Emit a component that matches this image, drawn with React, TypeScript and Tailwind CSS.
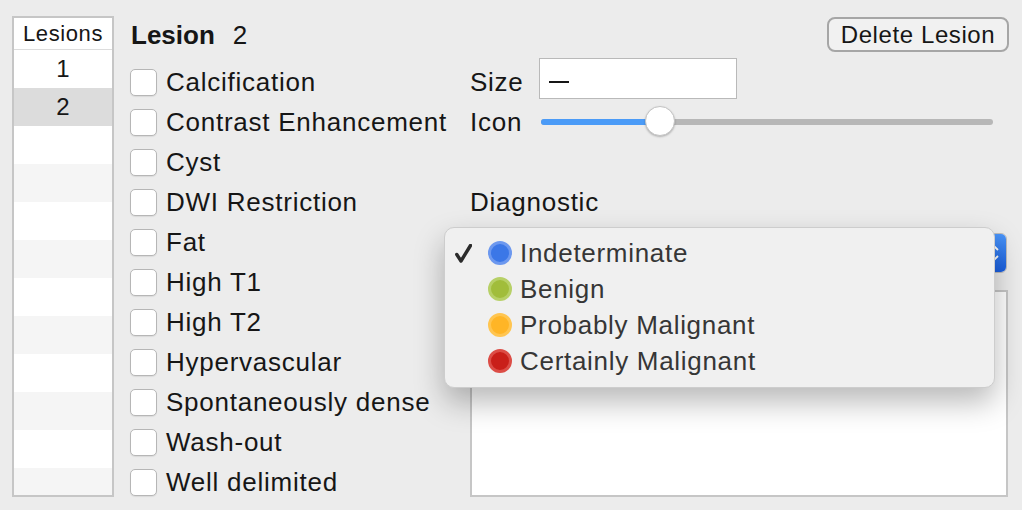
import React from 'react';

const findings = [
  'Calcification',
  'Contrast Enhancement',
  'Cyst',
  'DWI Restriction',
  'Fat',
  'High T1',
  'High T2',
  'Hypervascular',
  'Spontaneously dense',
  'Wash-out',
  'Well delimited',
];

const diagnostics = [
  { label: 'Indeterminate', ring: 'border-[#6c98ef]', fill: 'bg-[#3b77e7]', checked: true },
  { label: 'Benign', ring: 'border-[#b7d067]', fill: 'bg-[#a1bd3b]', checked: false },
  { label: 'Probably Malignant', ring: 'border-[#ffc550]', fill: 'bg-[#ffb526]', checked: false },
  { label: 'Certainly Malignant', ring: 'border-[#dc4d46]', fill: 'bg-[#c91f19]', checked: false },
];

export default function App() {
  return (
    <div className="w-[1022px] h-[510px] bg-[#ececec] flex pt-[16px] pl-[12px] pr-[13px] font-['Liberation_Sans',Arial,sans-serif] text-[#161616] overflow-hidden">
      <LesionTable />

      <div className="ml-[16px] flex-1 flex flex-col">
        <div className="mt-[1px] h-[35px] flex items-center justify-between">
          <div className="pl-[1px] flex items-baseline text-[26px] leading-none">
            <span className="font-bold">Lesion</span>
            <span className="ml-[18px]">2</span>
          </div>
          <button className="w-[182px] h-[35px] rounded-[8px] border-2 border-[#a6a6a6] bg-[#f1f1f1] text-[24px] tracking-[0.6px] leading-none">
            Delete Lesion
          </button>
        </div>

        <div className="mt-[10px] flex">
          <div className="w-[340px] flex flex-col">
            {findings.map((f) => (
              <Check key={f} label={f} />
            ))}
          </div>

          <div className="w-[538px] flex flex-col">
            <div className="h-[40px] flex items-center">
              <span className="w-[69px] text-[26px] tracking-[0.75px] leading-none">Size</span>
              <div className="w-[198px] h-[41px] mb-[7px] bg-white border border-[#b9b9b9] flex items-center pl-[9px] pt-[6px]">
                <div className="w-[20px] h-[2px] bg-[#161616]" />
              </div>
            </div>
            <div className="h-[40px] flex items-center">
              <span className="w-[71px] text-[26px] tracking-[0.75px] leading-none">Icon</span>
              <Slider />
            </div>
            <div className="h-[40px]" />
            <div className="h-[40px] flex items-center">
              <span className="text-[26px] tracking-[0.75px] leading-none">Diagnostic</span>
            </div>

            <div className="mt-[11px] h-[40px] relative">
              <PopupButton />
              <DiagnosticMenu />
            </div>

            <div className="mt-[17px] h-[207px] bg-white border-2 border-[#c6c6c6]" />
          </div>
        </div>
      </div>
    </div>
  );
}

function LesionTable() {
  const rows = Array.from({ length: 12 }, (_, i) => i);
  return (
    <div className="w-[102px] h-[481px] shrink-0 border-2 border-[#c6c6c6] bg-white flex flex-col overflow-hidden">
      <div className="h-[32px] shrink-0 border-b border-[#dcdcdc] flex items-center justify-center text-[22px] tracking-[0.6px] leading-none">
        Lesions
      </div>
      {rows.map((i) => (
        <div
          key={i}
          className={`h-[38px] shrink-0 flex items-center justify-center text-[24px] leading-none ${
            i === 1 ? 'bg-[#dcdcdc]' : i % 2 ? 'bg-[#f5f5f5]' : 'bg-white'
          }`}
        >
          {i < 2 ? i + 1 : ''}
        </div>
      ))}
    </div>
  );
}

function Check({ label }: { label: string }) {
  return (
    <div className="h-[40px] flex items-center">
      <div className="w-[27px] h-[27px] rounded-[5px] bg-white border border-[#b6b6b6] shadow-[0_1px_1px_rgba(0,0,0,0.08)]" />
      <span className="ml-[9px] text-[26px] tracking-[0.75px] leading-none">{label}</span>
    </div>
  );
}

function Slider() {
  return (
    <div className="relative w-[452px] h-[30px] flex items-center">
      <div className="w-full h-[6px] rounded-full bg-[#b7b7b7] overflow-hidden">
        <div className="w-[120px] h-full bg-[#4b9bf7]" />
      </div>
      <div className="absolute left-[104px] top-[-1px] w-[30px] h-[30px] rounded-full bg-white border border-[#c4c4c4] shadow-[0_1px_2px_rgba(0,0,0,0.25)]" />
    </div>
  );
}

function PopupButton() {
  return (
    <div className="h-full w-[537px] rounded-[6px] border border-[#bdbdbd] bg-white flex overflow-hidden">
      <div className="flex-1" />
      <div className="w-[22px] h-full bg-gradient-to-b from-[#4a94f8] to-[#1a5fe1] flex items-center justify-center">
        <svg width="10" height="20" viewBox="0 0 10 20" fill="none" stroke="#fff" strokeWidth="1.8">
          <path d="M2 7 L5 4 L8 7" />
          <path d="M2 13 L5 16 L8 13" />
        </svg>
      </div>
    </div>
  );
}

function DiagnosticMenu() {
  return (
    <div className="absolute left-[-26px] top-[-6px] w-[551px] h-[161px] rounded-[10px] bg-[#f0f0f0] border border-[#cdcdcd] shadow-[0_14px_30px_rgba(0,0,0,0.28)] pt-[7px] text-[#363636]">
      {diagnostics.map((d) => (
        <div key={d.label} className="h-[36px] flex items-center">
          <div className="w-[43px] pl-[10px] flex items-center">
            {d.checked && (
              <svg width="17" height="19" viewBox="0 0 17 19" fill="none">
                <path d="M1.8 10.5 L6 17 L15.5 1.5" stroke="#2b2b2b" strokeWidth="3.4" strokeLinejoin="round" strokeLinecap="round" />
              </svg>
            )}
          </div>
          <div className={`w-[24px] h-[24px] rounded-full border-[3px] ${d.ring} ${d.fill}`} />
          <span className="ml-[8px] text-[26px] tracking-[0.7px] leading-none">{d.label}</span>
        </div>
      ))}
    </div>
  );
}
